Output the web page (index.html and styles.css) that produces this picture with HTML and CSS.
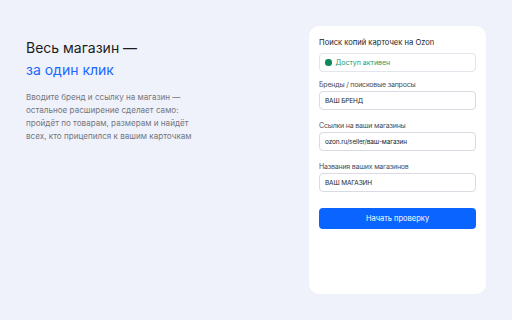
FILE: index.html
```html
<!DOCTYPE html>
<html lang="ru">
<head>
<meta charset="utf-8">
<link rel="stylesheet" href="styles.css">
</head>
<body>
<main class="page">
  <section class="intro">
    <h1 class="title">Весь магазин —<br><span class="accent">за один клик</span></h1>
    <p class="lead">Вводите бренд и ссылку на магазин —<br>остальное расширение сделает само:<br>пройдёт по товарам, размерам и найдёт<br>всех, кто прицепился к вашим карточкам</p>
  </section>
  <section class="card">
    <h2 class="card-title">Поиск копий карточек на Ozon</h2>
    <div class="status"><span class="dot"></span>Доступ активен</div>
    <label class="field">
      <span class="label">Бренды / поисковые запросы</span>
      <span class="input">ВАШ БРЕНД</span>
    </label>
    <label class="field">
      <span class="label">Ссылки на ваши магазины</span>
      <span class="input">ozon.ru/seller/ваш-магазин</span>
    </label>
    <label class="field">
      <span class="label">Названия ваших магазинов</span>
      <span class="input">ВАШ МАГАЗИН</span>
    </label>
    <button class="btn">Начать проверку</button>
  </section>
</main>
</body>
</html>
```
FILE: styles.css
```css
* { box-sizing: border-box; }
html, body { margin: 0; padding: 0; }
body {
  width: 512px;
  height: 320px;
  background: #eff2fa;
  font-family: Inter, "Noto Sans", sans-serif;
  color: #1b1d22;
  overflow: hidden;
}
.page {
  display: flex;
  justify-content: space-between;
  padding: 26px;
  height: 320px;
}
.intro {
  padding-top: 11px;
}
.title {
  margin: 0;
  font-size: 14px;
  line-height: 22px;
  font-weight: 400;
}
.accent { color: #1a66ff; }
.lead {
  margin: 10px 0 0;
  font-size: 8.1px;
  line-height: 13px;
  color: #73767f;
}
.card {
  width: 177px;
  background: #fff;
  border-radius: 10px;
  padding: 11px 10px;
  display: flex;
  flex-direction: column;
}
.card-title {
  margin: 0;
  font-size: 7.6px;
  line-height: 11px;
  font-weight: 400;
  color: #23252b;
}
.status {
  margin-top: 5px;
  height: 19px;
  border: 1px solid #e2e5ec;
  border-radius: 4px;
  display: flex;
  align-items: center;
  padding-left: 5px;
  font-size: 7px;
  color: #1f9a6a;
}
.dot {
  width: 6.5px;
  height: 6.5px;
  border-radius: 50%;
  background: #0e8a5a;
  margin-right: 4px;
}
.field {
  display: flex;
  flex-direction: column;
  margin-top: 8px;
}
.field + .field {
  margin-top: 11px;
}
.label {
  font-size: 7px;
  line-height: 9px;
  letter-spacing: -0.2px;
  color: #4a4d55;
  margin-bottom: 2px;
}
.input {
  height: 19px;
  border: 1px solid #d8dbe2;
  border-radius: 4px;
  display: flex;
  align-items: center;
  padding-left: 5px;
  font-size: 6.5px;
  letter-spacing: -0.15px;
  color: #23252b;
}
.btn {
  margin-top: 16px;
  height: 21px;
  border: 0;
  border-radius: 4px;
  background: #0a64ff;
  color: #fff;
  font-family: inherit;
  font-size: 7.5px;
  padding: 0;
}
```
